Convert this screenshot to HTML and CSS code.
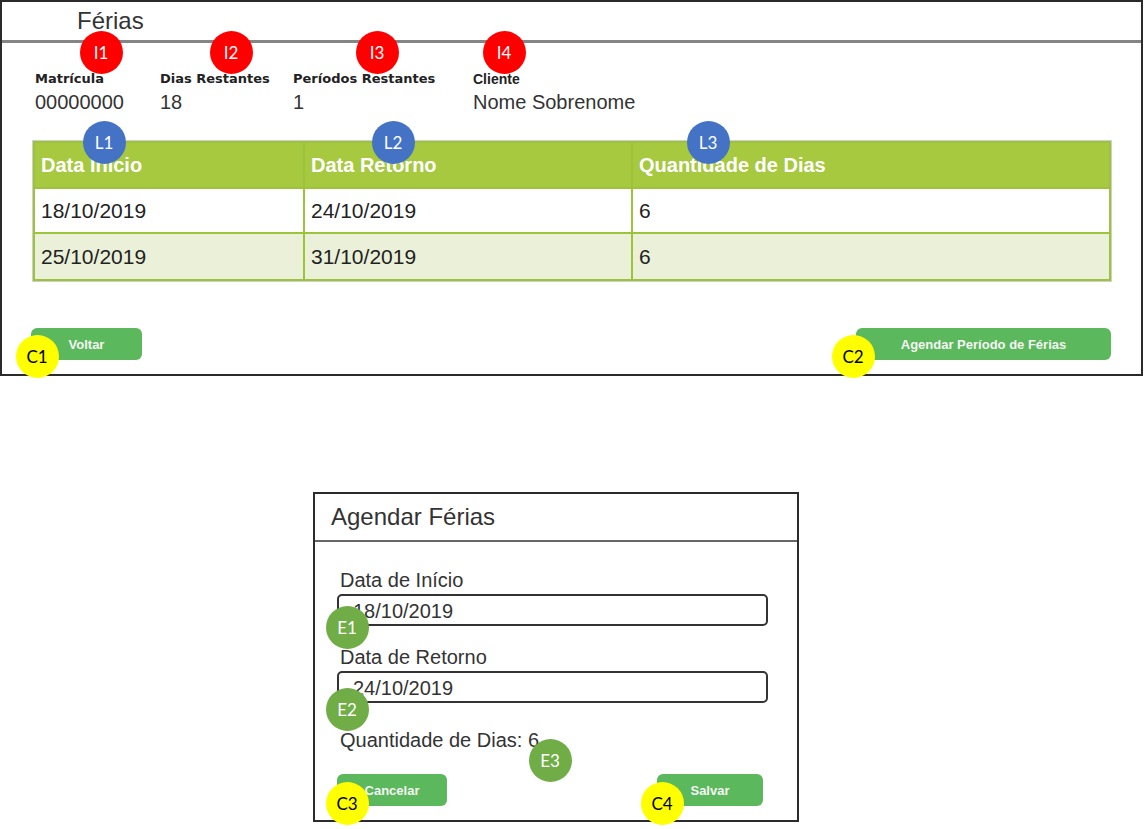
FILE: index.html
```html
<!DOCTYPE html>
<html lang="pt-BR">
<head>
<meta charset="utf-8">
<title>Férias</title>
<link rel="stylesheet" href="styles.css">
</head>
<body>
<div class="page">
  <section class="panel">
    <header class="panel-head"><h1 class="panel-title">Férias</h1></header>
    <div class="info">
      <div class="info-item"><div class="info-label">Matrícula</div><div class="info-value">00000000</div></div>
      <div class="info-item"><div class="info-label">Dias Restantes</div><div class="info-value">18</div></div>
      <div class="info-item"><div class="info-label">Períodos Restantes</div><div class="info-value">1</div></div>
      <div class="info-item"><div class="info-label label-narrow">Cliente</div><div class="info-value">Nome Sobrenome</div></div>
    </div>
    <div class="table-wrap">
      <table class="grid">
        <thead>
          <tr><th class="c1">Data Início</th><th class="c2">Data Retorno</th><th class="c3">Quantidade de Dias</th></tr>
        </thead>
        <tbody>
          <tr><td>18/10/2019</td><td>24/10/2019</td><td>6</td></tr>
          <tr class="alt"><td>25/10/2019</td><td>31/10/2019</td><td>6</td></tr>
        </tbody>
      </table>
    </div>
    <div class="actions">
      <button class="btn btn-back">Voltar</button>
      <button class="btn btn-schedule">Agendar Período de Férias</button>
    </div>
  </section>

  <section class="dialog">
    <header class="dialog-head"><h2 class="dialog-title">Agendar Férias</h2></header>
    <div class="dialog-body">
      <label class="field-label">Data de Início</label>
      <div class="field-input">18/10/2019</div>
      <label class="field-label field-gap">Data de Retorno</label>
      <div class="field-input">24/10/2019</div>
      <div class="qty">Quantidade de Dias: 6</div>
      <div class="dialog-actions">
        <button class="btn btn-cancel">Cancelar</button>
        <button class="btn btn-save">Salvar</button>
      </div>
    </div>
  </section>

  <span class="badge red b-i1">I1</span>
  <span class="badge red b-i2">I2</span>
  <span class="badge red b-i3">I3</span>
  <span class="badge red b-i4">I4</span>
  <span class="badge blue b-l1">L1</span>
  <span class="badge blue b-l2">L2</span>
  <span class="badge blue b-l3">L3</span>
  <span class="badge yellow b-c1">C1</span>
  <span class="badge yellow b-c2">C2</span>
  <span class="badge yellow b-c3">C3</span>
  <span class="badge yellow b-c4">C4</span>
  <span class="badge green b-e1">E1</span>
  <span class="badge green b-e2">E2</span>
  <span class="badge green b-e3">E3</span>
</div>
</body>
</html>
```

FILE: styles.css
```css
* { box-sizing: border-box; }
html, body { margin: 0; padding: 0; background: #fff; }
body { font-family: "Liberation Sans", Arial, sans-serif; color: #333; }

.page { position: relative; width: 1144px; height: 829px; }

/* main panel */
.panel {
  width: 1143px;
  border: 2px solid #2b2b2b;
  padding-bottom: 14px;
}
.panel-head {
  height: 41px;
  border-bottom: 3px solid #858585;
}
.panel-title {
  margin: 0;
  padding-left: 75px;
  font-weight: normal;
  font-size: 24px;
  line-height: 38px;
  color: #333;
}

.info {
  display: grid;
  grid-template-columns: 125px 133px 180px auto;
  padding: 28px 0 0 33px;
}
.info-label {
  font-family: "DejaVu Sans", Verdana, sans-serif;
  font-weight: bold;
  font-size: 13px;
  line-height: 16px;
  color: #222;
}
.label-narrow { font-family: "Liberation Sans", Arial, sans-serif; font-size: 14px; }
.info-value {
  margin-top: 3px;
  font-size: 20px;
  line-height: 24px;
  color: #333;
}

.table-wrap {
  margin: 26px 0 0 30px;
  width: 1080px;
  border: 1px solid #cfcfcf;
}
.grid {
  width: 100%;
  border-collapse: collapse;
  font-size: 21px;
}
.grid th, .grid td {
  border: 2px solid #9dc33a;
  text-align: left;
  padding: 0 0 0 6px;
}
.grid th {
  height: 46px;
  background: #a6c93f;
  color: #fff;
  font-weight: bold;
  font-size: 20px;
}
.grid td { height: 45px; color: #222; background: #fff; }
.grid tr.alt td { background: #ebf1d8; height: 47px; }
.c1 { width: 270px; }
.c2 { width: 328px; }

.actions {
  display: flex;
  justify-content: space-between;
  margin-top: 46px;
  padding: 0 30px 0 29px;
}
.btn {
  height: 32px;
  border: none;
  border-radius: 6px;
  background: #5cb85c;
  color: #f4f4f4;
  font-family: "Liberation Sans", Arial, sans-serif;
  font-weight: bold;
  font-size: 13px;
  padding: 0;
}
.btn-back { width: 111px; }
.btn-schedule { width: 255px; }

/* dialog */
.dialog {
  margin: 116px 0 0 313px;
  width: 486px;
  border: 2px solid #2b2b2b;
}
.dialog-head {
  height: 48px;
  border-bottom: 2px solid #666;
}
.dialog-title {
  margin: 0;
  padding-left: 16px;
  font-weight: normal;
  font-size: 24px;
  line-height: 46px;
  color: #333;
}
.dialog-body {
  padding: 27px 29px 14px 22px;
}
.field-label {
  display: block;
  padding-left: 3px;
  font-size: 20px;
  line-height: 23px;
  color: #333;
}
.field-gap { margin-top: 20px; }
.field-input {
  margin-top: 2px;
  height: 32px;
  border: 2px solid #333;
  border-radius: 5px;
  padding-left: 14px;
  font-size: 20px;
  line-height: 31px;
  color: #333;
}
.qty {
  margin-top: 26px;
  padding-left: 3px;
  font-size: 20px;
  line-height: 23px;
  color: #333;
}
.dialog-actions {
  display: flex;
  justify-content: space-between;
  margin-top: 22px;
  padding-right: 5px;
}
.btn-cancel { width: 110px; }
.btn-save { width: 106px; }

/* annotation badges */
.badge {
  position: absolute;
  width: 43px;
  height: 43px;
  margin: -21.5px 0 0 -21.5px;
  border-radius: 50%;
  display: flex;
  align-items: center;
  justify-content: center;
  font-family: Lato, "Open Sans", sans-serif;
  font-size: 17px;
  color: #fff;
}
.red { background: #ff0000; }
.blue { background: #4472c4; }
.yellow { background: #ffff00; color: #000; }
.green { background: #70ad47; }

.b-i1 { left: 101px; top: 52px; }
.b-i2 { left: 231px; top: 52px; }
.b-i3 { left: 377px; top: 52px; }
.b-i4 { left: 504px; top: 52px; }
.b-l1 { left: 104px; top: 142px; }
.b-l2 { left: 393px; top: 142px; }
.b-l3 { left: 708px; top: 142px; }
.b-c1 { left: 37px; top: 356px; }
.b-c2 { left: 853px; top: 356px; }
.b-c3 { left: 347px; top: 803px; }
.b-c4 { left: 662px; top: 803px; }
.b-e1 { left: 347px; top: 627px; }
.b-e2 { left: 347px; top: 709px; }
.b-e3 { left: 550px; top: 760px; }
```
